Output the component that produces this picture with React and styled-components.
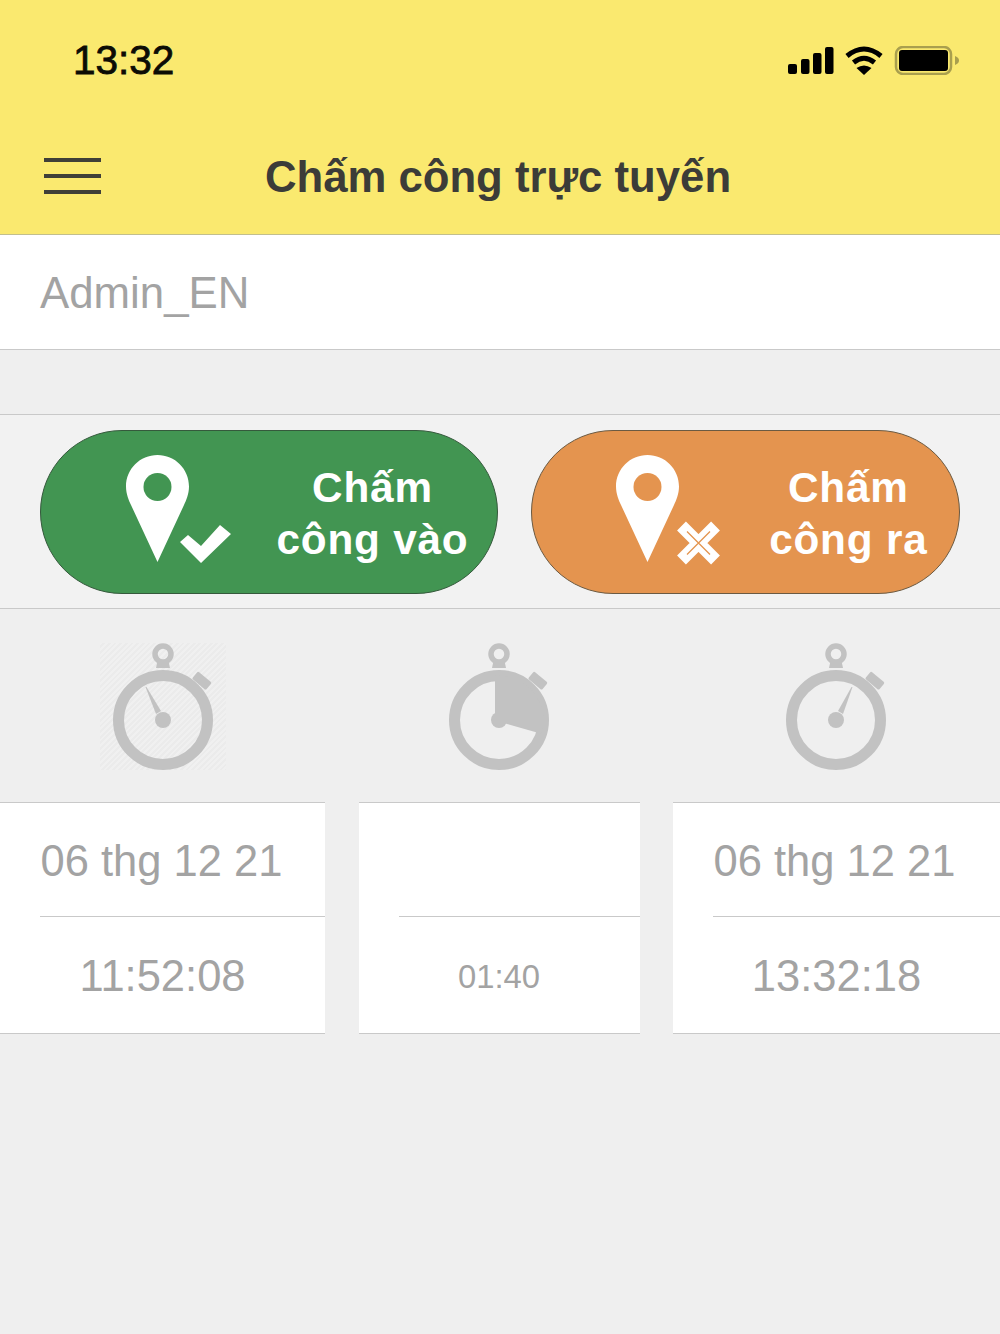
import styled, { createGlobalStyle } from "styled-components";

const GlobalStyle = createGlobalStyle`
  html, body {
    margin: 0;
    padding: 0;
    background: #efefef;
    font-family: "Liberation Sans", Arial, sans-serif;
  }
  * {
    box-sizing: border-box;
  }
`;

const Page = styled.div`
  width: 1000px;
  height: 1334px;
  background: #efefef;
  overflow: hidden;
`;

const Header = styled.header`
  height: 235px;
  background: #fae96f;
  border-bottom: 1px solid #c2bf8d;
`;

const StatusBar = styled.div`
  height: 120px;
  display: flex;
  align-items: center;
  justify-content: space-between;
  padding: 0 40px 0 73px;
`;

const Clock = styled.span`
  font-size: 40.5px;
  color: #0c0c05;
  -webkit-text-stroke: 0.8px #0c0c05;
`;

const NavBar = styled.div`
  height: 114px;
  display: grid;
  grid-template-columns: 1fr auto 1fr;
  align-items: center;
  padding: 0 48px 0 44px;
`;

const MenuIcon = styled.div`
  width: 57px;
  height: 36px;
  margin-top: -3px;
  display: flex;
  flex-direction: column;
  justify-content: space-between;

  span {
    height: 4px;
    background: #3f3f38;
  }
`;

const Title = styled.h1`
  margin: 0;
  font-size: 43.7px;
  font-weight: 700;
  color: #3c3c38;
`;

const UserRow = styled.div`
  height: 115px;
  display: flex;
  align-items: center;
  padding: 2px 40px 0;
  background: #fff;
  border-bottom: 1px solid #c9c9c9;
  font-size: 43.8px;
  color: #a3a3a3;
`;

const Spacer = styled.div`
  height: 65px;
  border-bottom: 1px solid #c9c9c9;
`;

const ActionRow = styled.div`
  height: 194px;
  display: flex;
  align-items: flex-start;
  gap: 33px;
  padding: 15px 40px 0;
  background: #f2f2f2;
  border-bottom: 1px solid #c9c9c9;
`;

const ActionButton = styled.button`
  flex: none;
  width: ${({ $width }) => $width}px;
  height: 164px;
  display: flex;
  align-items: center;
  justify-content: space-between;
  padding: 0 ${({ $right }) => $right}px 0 ${({ $left }) => $left}px;
  border: 1px solid ${({ $edge }) => $edge};
  border-radius: 82px;
  background: ${({ $color }) => $color};
  color: #fff;
  font-family: inherit;
`;

const ActionLabel = styled.span`
  padding-top: 3px;
  font-size: 42.3px;
  font-weight: 700;
  line-height: 52px;
  letter-spacing: 0.8px;
  text-align: center;
`;

const Stats = styled.div`
  display: grid;
  grid-template-columns: 325px 281px 327px;
  justify-content: space-between;
`;

const StatColumn = styled.div`
  display: flex;
  flex-direction: column;
  align-items: center;
`;

const WatchFrame = styled.div`
  width: 126px;
  height: 127px;
  margin: 34px ${({ $nudge }) => $nudge || 0}px 32px 0;
  background: ${({ $hatched }) =>
    $hatched
      ? "repeating-linear-gradient(135deg, #f0f0f0 0 2px, #ebebeb 2px 4px)"
      : "none"};
`;

const StatCard = styled.div`
  align-self: stretch;
  height: 232px;
  background: #fff;
  border-top: 1px solid #c9c9c9;
  border-bottom: 1px solid #c9c9c9;
`;

const DateLine = styled.div`
  height: 114px;
  display: flex;
  align-items: center;
  margin-left: 40px;
  padding: 3px 0 0 0.5px;
  border-bottom: 1px solid #c9c9c9;
  font-size: 43.5px;
  color: #a3a3a3;
`;

const TimeLine = styled.div`
  height: 115px;
  display: flex;
  align-items: center;
  justify-content: center;
  padding-top: ${({ $small }) => ($small ? 4 : 3)}px;
  font-size: ${({ $small }) => ($small ? 32.8 : 43.5)}px;
  color: #a3a3a3;
`;

const StatusIcons = () => (
  <svg width="172" height="29" viewBox="0 0 172 29">
    <rect x="0" y="18" width="9" height="10" rx="2" fill="#000" />
    <rect x="13" y="13" width="8.500" height="15" rx="2" fill="#000" />
    <rect x="25" y="7" width="8.500" height="21" rx="2" fill="#000" />
    <rect x="37" y="1" width="8.500" height="27" rx="2" fill="#000" />
    <path d="M59 10Q76 -4 93 10" fill="none" stroke="#000" strokeWidth="5" />
    <path d="M65.500 16.500Q76 8 86.500 16.500" fill="none" stroke="#000" strokeWidth="5" />
    <path d="M68.500 22Q76 17 83.500 22L76 29Z" fill="#000" />
    <rect x="108" y="1" width="55" height="27" rx="7" fill="none" stroke="#a99f4e" strokeWidth="2.500" />
    <rect x="111" y="4" width="49" height="21" rx="3" fill="#000" />
    <path d="M167 10C170 11 171 13 171 14.500C171 16 170 18 167 19Z" fill="#a99f4e" />
  </svg>
);

const PinIcon = ({ color, children }) => (
  <svg width="106" height="114" viewBox="0 0 106 114">
    <path
      d="M31.500 0C14 0 0 14 0 31.500C0 39 3 46 5 50L31.500 107L58 50C60 46 63 39 63 31.500C63 14 49 0 31.500 0Z"
      fill="#fff"
    />
    <circle cx="31.500" cy="32" r="14" fill={color} />
    {children}
  </svg>
);

const CheckMark = () => (
  <path d="M54 87L62 80L75 91L94 70L105 79L75 108Z" fill="#fff" />
);

const CrossMark = ({ color }) => (
  <g>
    <path d="M65.500 71L99.500 105M99.500 71L65.500 105" stroke="#fff" strokeWidth="12.500" />
    <path d="M71 76.500L94 99.500M94 76.500L71 99.500" stroke={color} strokeWidth="1.300" />
  </g>
);

// hand points straight at the dial, wedge is the elapsed part of the middle watch
const Stopwatch = ({ hand, wedge }) => (
  <svg width="126" height="127" viewBox="0 0 126 127">
    <circle cx="63" cy="11" r="8" fill="none" stroke="#c2c2c2" strokeWidth="5.500" />
    <path d="M57.500 18H68.500L70 25H56Z" fill="#c2c2c2" />
    <circle cx="63" cy="77" r="44.500" fill="none" stroke="#c2c2c2" strokeWidth="11" />
    <rect x="93" y="33" width="18" height="9.500" rx="1.500" fill="#c2c2c2" transform="rotate(40 102 37.500)" />
    <circle cx="63" cy="77" r="8" fill="#c2c2c2" />
    {hand && <path d={hand} fill="#c2c2c2" />}
    {wedge && <path d={wedge} fill="#c2c2c2" />}
  </svg>
);

const stats = [
  {
    width: "first",
    date: "06 thg 12 21",
    time: "11:52:08",
    hatched: true,
    hand: "M45.500 44L46.500 44L61 68L56 71Z",
  },
  {
    width: "middle",
    date: "",
    time: "01:40",
    small: true,
    nudge: 1,
    wedge: "M59 33L59 77L71 81L105.300 90.700A44.500 44.500 0 0 0 59 33Z",
  },
  {
    width: "last",
    date: "06 thg 12 21",
    time: "13:32:18",
    nudge: 2,
    hand: "M79.500 44L78.500 44L65 68L70 71Z",
  },
];

export default function App() {
  return (
    <Page>
      <GlobalStyle />
      <Header>
        <StatusBar>
          <Clock>13:32</Clock>
          <StatusIcons />
        </StatusBar>
        <NavBar>
          <MenuIcon>
            <span />
            <span />
            <span />
          </MenuIcon>
          <Title>Chấm công trực tuyến</Title>
        </NavBar>
      </Header>
      <UserRow>Admin_EN</UserRow>
      <Spacer />
      <ActionRow>
        <ActionButton $width={457.5} $left={85} $right={28} $color="#429552" $edge="#35593c">
          <PinIcon color="#429552">
            <CheckMark />
          </PinIcon>
          <ActionLabel>
            Chấm
            <br />
            công vào
          </ActionLabel>
        </ActionButton>
        <ActionButton $width={429} $left={84} $right={31} $color="#e4944f" $edge="#6b5a42">
          <PinIcon color="#e4944f">
            <CrossMark color="#e4944f" />
          </PinIcon>
          <ActionLabel>
            Chấm
            <br />
            công ra
          </ActionLabel>
        </ActionButton>
      </ActionRow>
      <Stats>
        {stats.map((item) => (
          <StatColumn key={item.width}>
            <WatchFrame $hatched={item.hatched} $nudge={item.nudge}>
              <Stopwatch hand={item.hand} wedge={item.wedge} />
            </WatchFrame>
            <StatCard>
              <DateLine>{item.date}</DateLine>
              <TimeLine $small={item.small}>{item.time}</TimeLine>
            </StatCard>
          </StatColumn>
        ))}
      </Stats>
    </Page>
  );
}
